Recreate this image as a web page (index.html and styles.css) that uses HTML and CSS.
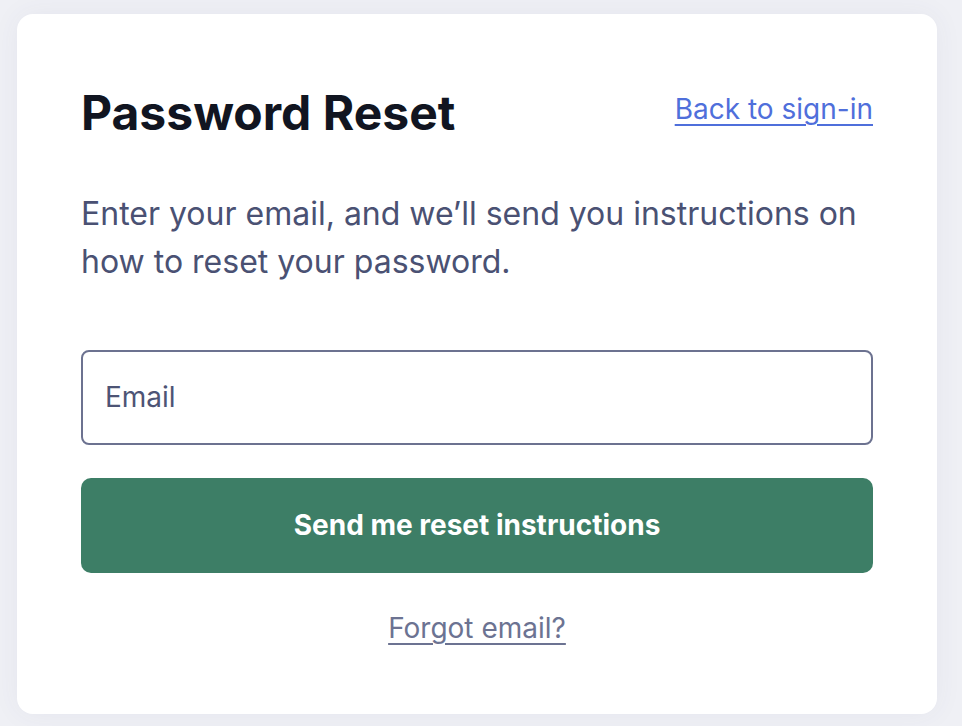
FILE: index.html
```html
<!DOCTYPE html>
<html lang="en">
<head>
<meta charset="utf-8">
<title>Password Reset</title>
<link rel="stylesheet" href="styles.css">
</head>
<body>
<main class="card">
  <header class="card-header">
    <h1 class="title">Password Reset</h1>
    <a class="back-link" href="#">Back to sign-in</a>
  </header>
  <p class="intro">Enter your email, and we’ll send you instructions on how to reset your password.</p>
  <form class="reset-form">
    <input class="email-input" type="email" placeholder="Email">
    <button class="submit-btn" type="button">Send me reset instructions</button>
  </form>
  <div class="forgot">
    <a class="forgot-link" href="#">Forgot email?</a>
  </div>
</main>
</body>
</html>
```
FILE: styles.css
```css
* { box-sizing: border-box; }
html, body { height: 100%; }
body {
  margin: 0;
  background: #eff0f5;
  font-family: Inter, "Noto Sans", sans-serif;
  padding: 14px 25px 12px 17px;
}
.card {
  background: #ffffff;
  border-radius: 16px;
  height: 700px;
  padding: 70px 64px 0 64px;
  box-shadow: 0 0 28px rgba(60, 70, 120, 0.06);
}
.card-header {
  display: flex;
  justify-content: space-between;
  align-items: flex-start;
}
.title {
  margin: 0;
  font-size: 48px;
  line-height: 57.6px;
  font-weight: 700;
  color: #111521;
}
.back-link {
  font-size: 28px;
  line-height: 42px;
  color: #4f6fdb;
  text-decoration: underline;
  text-underline-offset: 5px;
  text-decoration-thickness: 2px;
  margin-top: 4px;
}
.intro {
  margin: 48px 0 0;
  font-size: 32px;
  line-height: 48px;
  color: #4a5173;
}
.reset-form {
  margin-top: 64px;
  display: flex;
  flex-direction: column;
  gap: 33px;
}
.email-input {
  height: 95px;
  border: 2px solid #6c7290;
  border-radius: 8px;
  padding: 0 22px;
  font-family: inherit;
  font-size: 28px;
  color: #111521;
  outline: none;
}
.email-input::placeholder { color: #4d5475; opacity: 1; }
.submit-btn {
  height: 95px;
  border: none;
  border-radius: 10px;
  background: #3d7e66;
  color: #ffffff;
  font-family: inherit;
  font-size: 28px;
  font-weight: 700;
  cursor: pointer;
}
.forgot {
  margin-top: 34px;
  text-align: center;
  font-size: 28px;
  line-height: 42px;
}
.forgot-link {
  color: #6c7392;
  text-decoration: underline;
  text-underline-offset: 5px;
  text-decoration-thickness: 2px;
}
```
